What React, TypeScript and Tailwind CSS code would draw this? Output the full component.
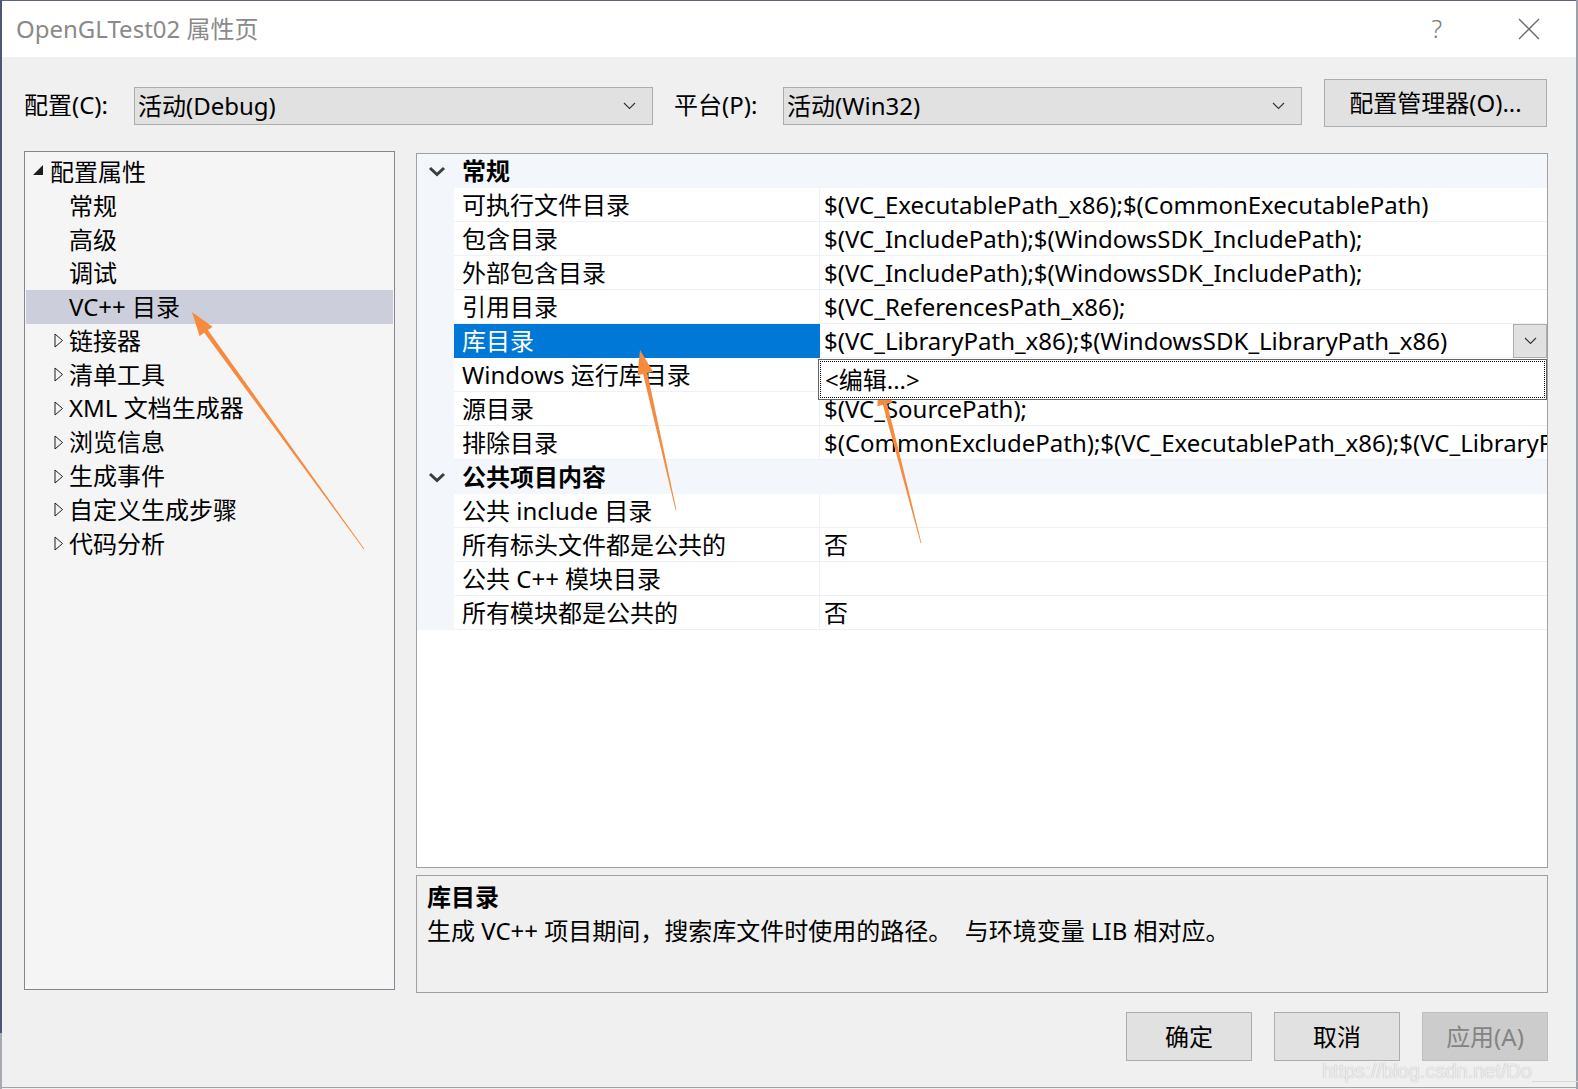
import React from "react";

type Row = { name: string; value: string; selected?: boolean };

const generalRows: Row[] = [
  { name: "可执行文件目录", value: "$(VC_ExecutablePath_x86);$(CommonExecutablePath)" },
  { name: "包含目录", value: "$(VC_IncludePath);$(WindowsSDK_IncludePath);" },
  { name: "外部包含目录", value: "$(VC_IncludePath);$(WindowsSDK_IncludePath);" },
  { name: "引用目录", value: "$(VC_ReferencesPath_x86);" },
  { name: "库目录", value: "$(VC_LibraryPath_x86);$(WindowsSDK_LibraryPath_x86)", selected: true },
  { name: "Windows 运行库目录", value: "" },
  { name: "源目录", value: "$(VC_SourcePath);" },
  {
    name: "排除目录",
    value: "$(CommonExcludePath);$(VC_ExecutablePath_x86);$(VC_LibraryPath_x86);$(WindowsSDK_LibraryPath_x86)",
  },
];

const publicRows: Row[] = [
  { name: "公共 include 目录", value: "" },
  { name: "所有标头文件都是公共的", value: "否" },
  { name: "公共 C++ 模块目录", value: "" },
  { name: "所有模块都是公共的", value: "否" },
];

const treeItems: { label: string; expander?: boolean; selected?: boolean }[] = [
  { label: "常规" },
  { label: "高级" },
  { label: "调试" },
  { label: "VC++ 目录", selected: true },
  { label: "链接器", expander: true },
  { label: "清单工具", expander: true },
  { label: "XML 文档生成器", expander: true },
  { label: "浏览信息", expander: true },
  { label: "生成事件", expander: true },
  { label: "自定义生成步骤", expander: true },
  { label: "代码分析", expander: true },
];

function Chevron({ className = "" }: { className?: string }) {
  return (
    <svg width="13" height="8" viewBox="0 0 13 8" className={className}>
      <path d="M1 1 L6.5 6.5 L12 1" fill="none" stroke="#333" strokeWidth="1.1" />
    </svg>
  );
}

function Dropdown({ text }: { text: string }) {
  return (
    <div className="w-[519px] h-[38px] bg-[#e1e1e1] border border-[#adadad] flex items-center justify-between pl-[3px] pr-[16px]">
      <span className="text-[24px] leading-none text-black">{text}</span>
      <Chevron />
    </div>
  );
}

function Arrow({ tail, tip }: { tail: [number, number]; tip: [number, number] }) {
  const dx = tip[0] - tail[0];
  const dy = tip[1] - tail[1];
  const len = Math.hypot(dx, dy);
  const ux = dx / len;
  const uy = dy / len;
  const nx = -uy;
  const ny = ux;
  const headLen = 24;
  const headW = 8;
  const bx = tip[0] - ux * headLen;
  const by = tip[1] - uy * headLen;
  const p = (x: number, y: number) => `${x.toFixed(1)},${y.toFixed(1)}`;
  const pts = [
    p(tail[0] + nx * 0.4, tail[1] + ny * 0.4),
    p(bx + nx * 2.2, by + ny * 2.2),
    p(bx + nx * headW, by + ny * headW),
    p(tip[0], tip[1]),
    p(bx - nx * headW, by - ny * headW),
    p(bx - nx * 2.2, by - ny * 2.2),
    p(tail[0] - nx * 0.4, tail[1] - ny * 0.4),
  ].join(" ");
  return <polygon points={pts} fill="#f68b3d" />;
}

function GridRow({ row }: { row: Row }) {
  return (
    <div className="flex h-[34px]">
      <div className="w-[37px] bg-[#f3f6fb]" />
      <div
        className={
          row.selected
            ? "w-[366px] bg-[#0078d7] text-white pl-[8px] leading-[34px] whitespace-nowrap"
            : "w-[366px] border-r border-b border-[#eef1f6] pl-[8px] leading-[34px] whitespace-nowrap"
        }
      >
        {row.name}
      </div>
      <div className="flex-1 min-w-0 flex border-b border-[#eef1f6]">
        <div className="flex-1 min-w-0 overflow-hidden whitespace-nowrap pl-[4px] leading-[34px]">{row.value}</div>
        {row.selected && (
          <div className="w-[34px] h-[34px] bg-[#e1e1e1] border border-[#adadad] flex items-center justify-center">
            <Chevron />
          </div>
        )}
      </div>
    </div>
  );
}

function Category({ title }: { title: string }) {
  return (
    <div className="flex h-[34px] bg-[#f3f6fb] items-center">
      <div className="w-[37px] flex justify-center pl-[3px]">
        <svg width="18" height="11" viewBox="0 0 18 11">
          <path d="M2 2 L9 8.5 L16 2" fill="none" stroke="#3c3c3c" strokeWidth="3" />
        </svg>
      </div>
      <div className="pl-[8px] font-bold leading-[34px]">{title}</div>
    </div>
  );
}

export default function App() {
  return (
    <div className="relative w-[1578px] h-[1089px] flex bg-[#f0f0f0] text-black text-[24px] font-['Noto_Sans','Noto_Sans_CJK_SC',sans-serif] overflow-hidden">
      {/* desktop edges behind the dialog */}
      <div className="w-[2px] flex flex-col">
        <div className="flex-1 bg-[#4b5679]" />
        <div className="h-[56px] bg-[#a9a9b2]" />
      </div>

      <div className="w-[1574px] h-[1088px] flex flex-col border-t border-[#5b6485] border-b border-b-[#a3a3a3]">
        {/* Title bar */}
        <div className="h-[56px] bg-white flex items-center pl-[14px] pr-[36px]">
          <span className="text-[#8a8a8a] text-[24px]">OpenGLTest02 属性页</span>
          <span className="ml-auto text-[#7a7a7a] text-[25px] font-light mr-[76px]">?</span>
          <svg width="22" height="22" viewBox="0 0 22 22">
            <path d="M1 1 L21 21 M21 1 L1 21" stroke="#6b6b6b" strokeWidth="1.4" />
          </svg>
        </div>

        {/* Body */}
        <div className="flex-1 flex flex-col pl-[22px] pr-[28px]">
          {/* Config row */}
          <div className="flex items-center h-[48px] mt-[22px]">
            <span className="w-[110px] whitespace-nowrap mt-[3px]">配置(C):</span>
            <div className="mt-[5px]">
              <Dropdown text="活动(Debug)" />
            </div>
            <span className="w-[109px] ml-[21px] whitespace-nowrap mt-[3px]">平台(P):</span>
            <div className="mt-[5px]">
              <Dropdown text="活动(Win32)" />
            </div>
            <div className="ml-[22px] w-[223px] h-[48px] bg-[#e1e1e1] border border-[#adadad] flex items-center justify-center">
              配置管理器(O)...
            </div>
          </div>

          {/* Main panels */}
          <div className="flex mt-[24px]">
            {/* Tree */}
            <div className="w-[371px] h-[839px] bg-[#f5f5f5] border border-[#828790] pt-[3px] px-[1px]">
              <div className="flex items-center h-[33.8px]">
                <svg width="10" height="10" viewBox="0 0 10 10" className="ml-[7px] mr-[7px] mt-[-4px]">
                  <polygon points="10,0 10,10 0,10" fill="#1e1e1e" />
                </svg>
                <span>配置属性</span>
              </div>
              {treeItems.map((it) => (
                <div
                  key={it.label}
                  className={
                    it.selected
                      ? "flex items-center h-[33.8px] bg-[#cccedb]"
                      : "flex items-center h-[33.8px]"
                  }
                >
                  <div className="w-[43px] flex justify-end pr-[5px]">
                    {it.expander && (
                      <svg width="10" height="15" viewBox="0 0 10 15">
                        <polygon points="1,1 8.5,7.5 1,14" fill="none" stroke="#1e1e1e" strokeWidth="1" />
                      </svg>
                    )}
                  </div>
                  <span className="whitespace-nowrap">{it.label}</span>
                </div>
              ))}
            </div>

            {/* Right column */}
            <div className="ml-[21px] mt-[2px] w-[1132px] flex flex-col">
              <div className="relative h-[715px] bg-white border border-[#a0a0a0]">
                <Category title="常规" />
                {generalRows.map((r) => (
                  <div key={r.name} className="relative">
                    <GridRow row={r} />
                    {r.selected && (
                      <div className="absolute z-10 left-[401px] right-0 top-[35px] h-[41px] bg-white border border-[#646464] p-[1px]">
                        <div className="h-full border border-dotted border-black pl-[4px] leading-[36px]">&lt;编辑...&gt;</div>
                      </div>
                    )}
                  </div>
                ))}
                <Category title="公共项目内容" />
                {publicRows.map((r) => (
                  <GridRow key={r.name} row={r} />
                ))}
              </div>

              <div className="mt-[7px] h-[118px] bg-[#f0f0f0] border border-[#a0a0a0] pl-[10px] pt-[5px]">
                <div className="font-bold leading-[32px]">库目录</div>
                <div className="leading-[36px] whitespace-pre">生成 VC++ 项目期间，搜索库文件时使用的路径。  与环境变量 LIB 相对应。</div>
              </div>
            </div>
          </div>

          {/* Buttons */}
          <div className="flex justify-end gap-[22px] mt-[19px]">
            <div className="w-[126px] h-[49px] bg-[#e1e1e1] border border-[#adadad] flex items-center justify-center">确定</div>
            <div className="w-[126px] h-[49px] bg-[#e1e1e1] border border-[#adadad] flex items-center justify-center">取消</div>
            <div className="w-[126px] h-[49px] bg-[#cccccc] border border-[#bfbfbf] text-[#838383] flex items-center justify-center">
              应用(A)
            </div>
          </div>
        </div>
      </div>

      <div className="w-[2px] bg-[#9ca0ad]" />

      {/* Watermark */}
      <div className="absolute left-[1322px] top-[1056px] flex items-end">
        <span className="text-[20px] text-white/80 [text-shadow:0_0_1px_#9a9a9a] font-['Liberation_Sans',sans-serif]">
          https://blog.csdn.net/Do
        </span>
        <div className="w-[82px] border-b border-[#d8d8d8] mb-[4px]" />
      </div>

      {/* Annotation arrows */}
      <svg className="absolute inset-0 pointer-events-none" width="1578" height="1089" viewBox="0 0 1578 1089">
        <Arrow tail={[364, 549]} tip={[192, 312]} />
        <Arrow tail={[676, 510]} tip={[640, 350]} />
        <Arrow tail={[921, 543]} tip={[879, 381]} />
      </svg>
    </div>
  );
}
